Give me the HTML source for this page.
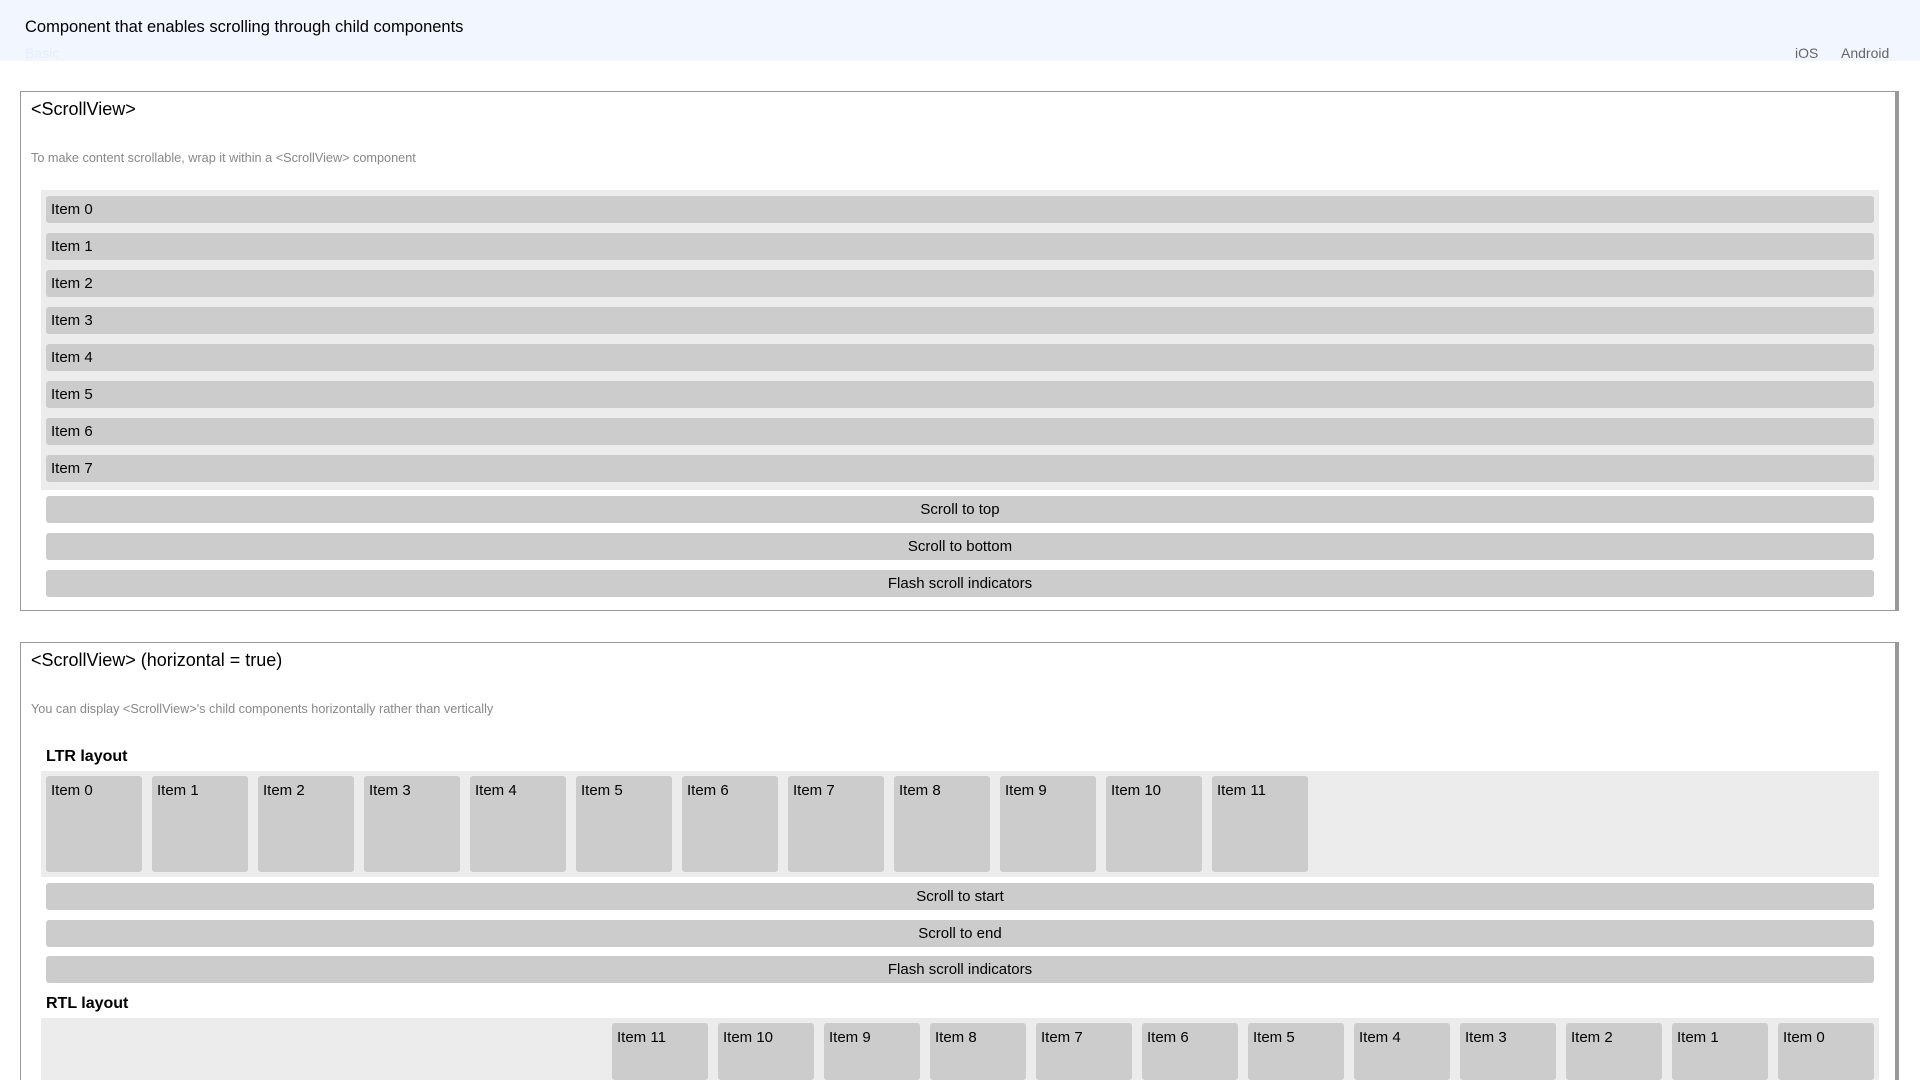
<!DOCTYPE html>
<html style="width:1920px;height:1080px;overflow:hidden"><head><meta charset="utf-8"><style>
*{margin:0;padding:0;box-sizing:border-box}
body{width:1920px;height:1080px;overflow:hidden;background:#fff;font-family:"Liberation Sans",Arial,sans-serif;color:#000;position:relative}
.a{position:absolute}
.hdr{left:0;top:0;width:1920px;height:61px;background:#f1f6ff}
.box{border:1px solid #999;border-right:4px solid #999;background:#fff}
.area{background:#ececec}
.bar{background:#ccc;border-radius:3px;height:27px;font-size:15px;line-height:27px}
.it{padding-left:5px}
.btn{text-align:center}
.tile{background:#ccc;border-radius:3px;width:96px;height:96px;font-size:15px;padding:6px 5px}
.t{font-size:18px}
.d{font-size:12.7px;color:#888}
.h{font-size:16px;font-weight:bold}
</style></head><body>
<div class="a hdr"></div>
<div class="a" style="left:25px;top:18px;font-size:16.5px">Component that enables scrolling through child components</div>
<div class="a" style="left:25px;top:45px;font-size:14px;color:#e6eefa">Basic</div>
<div class="a" style="left:1795px;top:45px;font-size:14px;color:#666">iOS</div>
<div class="a" style="left:1841px;top:45px;font-size:14px;color:#666">Android</div>

<div class="a box" style="left:20px;top:91px;width:1879px;height:520px"></div>
<div class="a t" style="left:31px;top:99px">&lt;ScrollView&gt;</div>
<div class="a d" style="left:31px;top:151px">To make content scrollable, wrap it within a &lt;ScrollView&gt; component</div>
<div class="a area" style="left:41px;top:190px;width:1838px;height:300px"></div>
<div class="a bar it" style="left:46px;top:196px;width:1828px">Item 0</div>
<div class="a bar it" style="left:46px;top:233px;width:1828px">Item 1</div>
<div class="a bar it" style="left:46px;top:270px;width:1828px">Item 2</div>
<div class="a bar it" style="left:46px;top:307px;width:1828px">Item 3</div>
<div class="a bar it" style="left:46px;top:344px;width:1828px">Item 4</div>
<div class="a bar it" style="left:46px;top:381px;width:1828px">Item 5</div>
<div class="a bar it" style="left:46px;top:418px;width:1828px">Item 6</div>
<div class="a bar it" style="left:46px;top:455px;width:1828px">Item 7</div>
<div class="a bar btn" style="left:46px;top:496px;width:1828px">Scroll to top</div>
<div class="a bar btn" style="left:46px;top:533px;width:1828px">Scroll to bottom</div>
<div class="a bar btn" style="left:46px;top:570px;width:1828px">Flash scroll indicators</div>

<div class="a box" style="left:20px;top:642px;width:1879px;height:438px;border-bottom:none"></div>
<div class="a t" style="left:31px;top:650px">&lt;ScrollView&gt; (horizontal = true)</div>
<div class="a d" style="left:31px;top:702px">You can display &lt;ScrollView&gt;'s child components horizontally rather than vertically</div>
<div class="a h" style="left:46px;top:748px">LTR layout</div>
<div class="a area" style="left:41px;top:771px;width:1838px;height:106px"></div>
<div class="a tile" style="left:46px;top:776px">Item 0</div>
<div class="a tile" style="left:152px;top:776px">Item 1</div>
<div class="a tile" style="left:258px;top:776px">Item 2</div>
<div class="a tile" style="left:364px;top:776px">Item 3</div>
<div class="a tile" style="left:470px;top:776px">Item 4</div>
<div class="a tile" style="left:576px;top:776px">Item 5</div>
<div class="a tile" style="left:682px;top:776px">Item 6</div>
<div class="a tile" style="left:788px;top:776px">Item 7</div>
<div class="a tile" style="left:894px;top:776px">Item 8</div>
<div class="a tile" style="left:1000px;top:776px">Item 9</div>
<div class="a tile" style="left:1106px;top:776px">Item 10</div>
<div class="a tile" style="left:1212px;top:776px">Item 11</div>
<div class="a bar btn" style="left:46px;top:883px;width:1828px">Scroll to start</div>
<div class="a bar btn" style="left:46px;top:920px;width:1828px">Scroll to end</div>
<div class="a bar btn" style="left:46px;top:956px;width:1828px">Flash scroll indicators</div>
<div class="a h" style="left:46px;top:995px">RTL layout</div>
<div class="a area" style="left:41px;top:1018px;width:1838px;height:62px"></div>
<div class="a tile" style="left:1778px;top:1023px;height:57px">Item 0</div>
<div class="a tile" style="left:1672px;top:1023px;height:57px">Item 1</div>
<div class="a tile" style="left:1566px;top:1023px;height:57px">Item 2</div>
<div class="a tile" style="left:1460px;top:1023px;height:57px">Item 3</div>
<div class="a tile" style="left:1354px;top:1023px;height:57px">Item 4</div>
<div class="a tile" style="left:1248px;top:1023px;height:57px">Item 5</div>
<div class="a tile" style="left:1142px;top:1023px;height:57px">Item 6</div>
<div class="a tile" style="left:1036px;top:1023px;height:57px">Item 7</div>
<div class="a tile" style="left:930px;top:1023px;height:57px">Item 8</div>
<div class="a tile" style="left:824px;top:1023px;height:57px">Item 9</div>
<div class="a tile" style="left:718px;top:1023px;height:57px">Item 10</div>
<div class="a tile" style="left:612px;top:1023px;height:57px">Item 11</div>
</body></html>
